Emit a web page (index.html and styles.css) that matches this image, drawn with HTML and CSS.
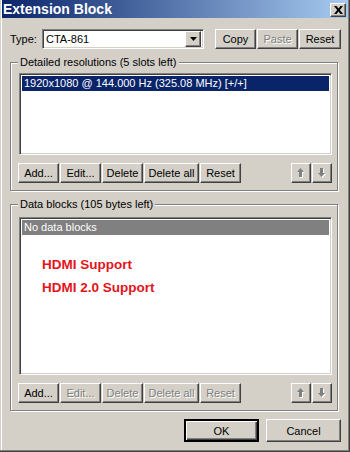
FILE: index.html
```html
<!DOCTYPE html>
<html lang="en">
<head>
    <meta charset="UTF-8">
    <title>Extension Block</title>
    <link rel="stylesheet" href="styles.css">
</head>
<body>
    <div class="window">
        <div class="titlebar">
            <span class="title">Extension Block</span>
            <button class="btn close">
                <svg width="9" height="8" viewBox="0 0 9 8"><path d="M0 0h2.5l2 2.6 2-2.6H9L5.8 4 9 8H6.5l-2-2.6-2 2.6H0l3.2-4z" fill="#000"/></svg>
            </button>
        </div>

        <div class="content">
            <div class="type-row">
                <span class="type-label">Type:</span>
                <div class="combo sunken">
                    <span class="combo-value">CTA-861</span>
                    <span class="btn combo-arrow">
                        <svg width="7" height="4" viewBox="0 0 7 4"><path d="M0 0h7L3.5 4z" fill="#000"/></svg>
                    </span>
                </div>
                <div class="type-buttons">
                    <button class="btn w41">Copy</button>
                    <button class="btn w41" disabled>Paste</button>
                    <button class="btn w42">Reset</button>
                </div>
            </div>

            <div class="group">
                <span class="group-title">Detailed resolutions (5 slots left)</span>
                <div class="list sunken list-small">
                    <div class="row selected">1920x1080 @ 144.000 Hz (325.08 MHz) [+/+]</div>
                </div>
                <div class="button-row">
                    <button class="btn w41">Add...</button>
                    <button class="btn w41">Edit...</button>
                    <button class="btn w41">Delete</button>
                    <button class="btn w55">Delete all</button>
                    <button class="btn w41">Reset</button>
                    <span class="spacer"></span>
                    <button class="btn arrow" disabled>
                        <svg width="8" height="10" viewBox="0 0 8 10"><path d="M4.5 1l3.5 4H6v5H3V5H1z" fill="#fff"/><path d="M3.5 0L7 4H5v5H2V4H0z" fill="#808080"/></svg>
                    </button>
                    <button class="btn arrow" disabled>
                        <svg width="8" height="10" viewBox="0 0 8 10"><path d="M3 1h3v5h2l-3.5 4L1 6h2z" fill="#fff"/><path d="M2 0h3v5h2L3.5 9 0 5h2z" fill="#808080"/></svg>
                    </button>
                </div>
            </div>

            <div class="group group-data">
                <span class="group-title">Data blocks (105 bytes left)</span>
                <div class="list sunken list-large">
                    <div class="row header">No data blocks</div>
                    <div class="notes">
                        <p>HDMI Support</p>
                        <p>HDMI 2.0 Support</p>
                    </div>
                </div>
                <div class="button-row">
                    <button class="btn w41">Add...</button>
                    <button class="btn w41" disabled>Edit...</button>
                    <button class="btn w41" disabled>Delete</button>
                    <button class="btn w55" disabled>Delete all</button>
                    <button class="btn w41" disabled>Reset</button>
                    <span class="spacer"></span>
                    <button class="btn arrow" disabled>
                        <svg width="8" height="10" viewBox="0 0 8 10"><path d="M4.5 1l3.5 4H6v5H3V5H1z" fill="#fff"/><path d="M3.5 0L7 4H5v5H2V4H0z" fill="#808080"/></svg>
                    </button>
                    <button class="btn arrow" disabled>
                        <svg width="8" height="10" viewBox="0 0 8 10"><path d="M3 1h3v5h2l-3.5 4L1 6h2z" fill="#fff"/><path d="M2 0h3v5h2L3.5 9 0 5h2z" fill="#808080"/></svg>
                    </button>
                </div>
            </div>

            <div class="dialog-buttons">
                <button class="btn default">OK</button>
                <button class="btn">Cancel</button>
            </div>
        </div>
    </div>
</body>
</html>
```

FILE: styles.css
```css
body {
    margin: 0;
    background-color: #d4d0c8;
    font-family: "Liberation Sans", Arial, sans-serif;
    font-size: 11px;
    color: #000;
}

.window {
    width: 350px;
    height: 452px;
    box-sizing: border-box;
    padding: 0 2px 2px 2px;
    background-color: #d4d0c8;
    box-shadow: inset -1px -1px #404040, inset -2px -2px #808080, inset 1px 0 #d4d0c8, inset 2px 0 #fff;
}

.titlebar {
    height: 18px;
    display: flex;
    align-items: center;
    padding: 0 2px 0 1px;
    background: linear-gradient(to right, #0a246a, #a6caf0);
}

.title {
    flex: 1;
    color: #fff;
    font-weight: bold;
    font-size: 14px;
}

/* classic raised button */
.btn {
    box-sizing: border-box;
    height: 20px;
    padding: 0;
    font-family: inherit;
    font-size: 11px;
    color: #000;
    background-color: #d4d0c8;
    border: 1px solid;
    border-color: #fff #404040 #404040 #fff;
    box-shadow: inset -1px -1px #808080, inset 1px 1px #d4d0c8;
    display: inline-flex;
    align-items: center;
    justify-content: center;
}

.btn:disabled {
    color: #808080;
    text-shadow: 1px 1px #fff;
}

.close {
    width: 16px;
    height: 14px;
    margin-top: 1px;
}

.sunken {
    box-sizing: border-box;
    background-color: #fff;
    border: 1px solid;
    border-color: #808080 #fff #fff #808080;
    box-shadow: inset 1px 1px #404040, inset -1px -1px #d4d0c8;
}

.content {
    padding: 0 7px 0 8px;
    display: flex;
    flex-direction: column;
}

.type-row {
    margin-top: 11px;
    height: 20px;
    display: flex;
    align-items: center;
}

.type-label {
    width: 32px;
}

.combo {
    width: 162px;
    height: 20px;
    display: flex;
    align-items: center;
    padding: 2px;
}

.combo-value {
    flex: 1;
    padding-left: 1px;
}

.combo-arrow {
    width: 16px;
    height: 16px;
}

.type-buttons {
    margin-left: auto;
    display: flex;
    gap: 1px;
}

.w41 { width: 41px; }
.w42 { width: 42px; }
.w55 { width: 55px; }

.group {
    margin: 13px 3px 0 0;
    padding: 0 5px 7px 8px;
    border: 1px solid #808080;
    box-shadow: inset 1px 1px #fff, 1px 1px #fff;
    display: flex;
    flex-direction: column;
}

.group-title {
    align-self: flex-start;
    margin: -7px 0 0 -1px;
    padding: 0 2px;
    line-height: 13px;
    background-color: #d4d0c8;
}

.list {
    margin-top: 4px;
    padding: 2px;
}

.list-small {
    height: 82px;
}

.group-data .list {
    margin-top: 6px;
}

.list-large {
    height: 158px;
}

.row {
    height: 15px;
    line-height: 15px;
    padding-left: 2px;
    white-space: nowrap;
}

.selected {
    background-color: #0a246a;
    color: #fff;
}

.header {
    background-color: #808080;
    color: #fff;
}

.notes {
    padding: 22px 0 0 20px;
}

.notes p {
    margin: 0;
    height: 23px;
    line-height: 16px;
    color: #e3141b;
    font-weight: bold;
    font-size: 13.5px;
}

.button-row {
    margin: 8px 0 0 -1px;
    display: flex;
    gap: 1px;
}

.spacer {
    flex: 1;
}

.arrow {
    width: 20px;
}

.dialog-buttons {
    margin-top: 8px;
    display: flex;
    justify-content: flex-end;
    gap: 7px;
}

.dialog-buttons .btn {
    width: 75px;
    height: 23px;
}

.default {
    border: 2px solid #000;
    box-shadow: inset 1px 1px #fff, inset -1px -1px #404040, inset -2px -2px #808080;
}
```
